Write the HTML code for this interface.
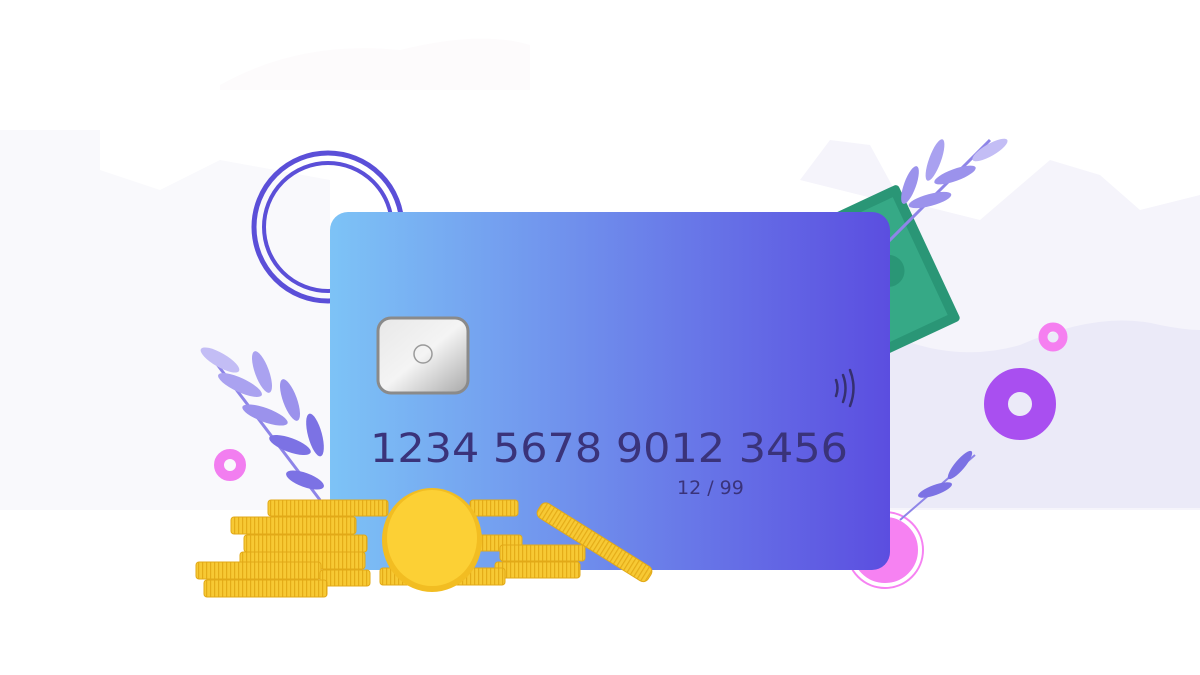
<!DOCTYPE html>
<html><head><meta charset="utf-8"><style>
html,body{margin:0;padding:0;background:#fff;width:1200px;height:675px;overflow:hidden}
svg{display:block}
text{font-family:"DejaVu Sans","Liberation Sans",sans-serif}
</style></head><body>
<svg width="1200" height="675" viewBox="0 0 1200 675" xmlns="http://www.w3.org/2000/svg">
<defs>
<linearGradient id="card" x1="0" y1="0" x2="1" y2="0">
<stop offset="0" stop-color="#7dc3f6"/><stop offset="0.45" stop-color="#6f8eec"/><stop offset="1" stop-color="#5b4ee0"/>
</linearGradient>
<linearGradient id="chip" x1="0" y1="0" x2="1" y2="1">
<stop offset="0" stop-color="#e8e8e8"/><stop offset="0.5" stop-color="#f4f4f4"/><stop offset="1" stop-color="#a9a9a9"/>
</linearGradient>
<pattern id="stripe" width="4" height="10" patternUnits="userSpaceOnUse"><rect width="4" height="10" fill="#f7c934"/><rect x="2" width="1.2" height="10" fill="#e4ac18"/></pattern>
</defs>
<!-- background -->
<path d="M220 85 Q300 40 400 50 Q480 30 530 45 L530 90 L220 90Z" fill="#fdfbfc"/>
<path d="M0 130 L100 130 L100 170 L160 190 L220 160 L330 180 L330 510 L0 510Z" fill="#f9f9fc"/>
<path d="M800 180 L830 140 L870 145 L900 200 L980 220 L1050 160 L1100 175 L1140 210 L1200 195 L1200 510 L880 510 L880 200Z" fill="#f5f4fb"/>
<path d="M880 330 Q950 365 1020 345 Q1100 310 1160 325 Q1185 330 1200 330 L1200 508 L880 508Z" fill="#ebeaf8"/>
<!-- double ring -->
<circle cx="328" cy="227" r="74" fill="none" stroke="#5b4fd8" stroke-width="5"/>
<circle cx="328" cy="227" r="64" fill="none" stroke="#5b4fd8" stroke-width="4"/>
<!-- pink/purple rings -->
<circle cx="1053" cy="337" r="10" fill="none" stroke="#f57ff0" stroke-width="9"/>
<circle cx="1020" cy="404" r="24" fill="none" stroke="#a94ff0" stroke-width="24"/>
<circle cx="230" cy="465" r="11" fill="none" stroke="#f27ef0" stroke-width="10"/>
<circle cx="885" cy="550" r="34" fill="#f682f2" stroke="#fff" stroke-width="2"/>
<circle cx="885" cy="550" r="38" fill="none" stroke="#f682f2" stroke-width="2"/>
<!-- money -->
<g transform="rotate(-25 900 260)">
<rect x="840" y="190" width="90" height="150" rx="4" fill="#2a9676"/>
<rect x="850" y="200" width="70" height="130" fill="#36a986"/>
<circle cx="885" cy="265" r="16" fill="#2a9676"/>
</g>
<!-- leaves -->
<g fill="#9b92ec">
<path d="M880 250 L990 140" stroke="#8e85e8" stroke-width="3"/>
<ellipse cx="990" cy="150" rx="20" ry="6" transform="rotate(-30 990 150)" fill="#c3bdf5"/>
<ellipse cx="955" cy="175" rx="22" ry="6" transform="rotate(-20 955 175)"/>
<ellipse cx="935" cy="160" rx="22" ry="6" transform="rotate(-70 935 160)" fill="#a9a1f0"/>
<ellipse cx="930" cy="200" rx="22" ry="6" transform="rotate(-15 930 200)"/>
<ellipse cx="910" cy="185" rx="20" ry="6" transform="rotate(-70 910 185)"/>
<path d="M320 500 L210 355" stroke="#8e85e8" stroke-width="3"/>
<ellipse cx="220" cy="360" rx="22" ry="7" transform="rotate(30 220 360)" fill="#c3bdf5"/>
<ellipse cx="240" cy="385" rx="24" ry="7" transform="rotate(25 240 385)" fill="#aaa2f0"/>
<ellipse cx="262" cy="372" rx="22" ry="7" transform="rotate(70 262 372)" fill="#aaa2f0"/>
<ellipse cx="265" cy="415" rx="24" ry="7" transform="rotate(20 265 415)"/>
<ellipse cx="290" cy="400" rx="22" ry="7" transform="rotate(70 290 400)"/>
<ellipse cx="290" cy="445" rx="22" ry="7" transform="rotate(20 290 445)" fill="#7c72e4"/>
<ellipse cx="315" cy="435" rx="22" ry="7" transform="rotate(75 315 435)" fill="#7c72e4"/>
<ellipse cx="305" cy="480" rx="20" ry="7" transform="rotate(20 305 480)" fill="#7c72e4"/>
<path d="M900 520 L975 455" stroke="#8e85e8" stroke-width="2"/>
<ellipse cx="960" cy="465" rx="18" ry="5" transform="rotate(-50 960 465)" fill="#7c72e4"/>
<ellipse cx="935" cy="490" rx="18" ry="5" transform="rotate(-20 935 490)" fill="#7c72e4"/>
</g>
<!-- card -->
<rect x="330" y="212" width="560" height="358" rx="18" fill="url(#card)"/>
<rect x="378" y="318" width="90" height="75" rx="13" fill="url(#chip)" stroke="#8a8a8a" stroke-width="3"/>
<circle cx="423" cy="354" r="9" fill="none" stroke="#9a9a9a" stroke-width="1.5"/>
<g fill="none" stroke="#35306f" stroke-width="2.5" stroke-linecap="round">
<path d="M836 380 Q839 388 836 396"/><path d="M843 375 Q848 388 843 402"/><path d="M850 370 Q857 388 850 406"/>
</g>
<text x="370" y="462" font-size="40" fill="#3a337a" textLength="478" lengthAdjust="spacingAndGlyphs">1234 5678 9012 3456</text>
<text x="677" y="494" font-size="19" fill="#3a337a">12 / 99</text>
<!-- coins -->
<g stroke="#e2a917" stroke-width="1">
<rect x="268" y="500" width="120" height="16" rx="3" fill="url(#stripe)"/>
<rect x="231" y="517" width="125" height="17" rx="3" fill="url(#stripe)"/>
<rect x="244" y="535" width="123" height="17" rx="3" fill="url(#stripe)"/>
<rect x="240" y="552" width="125" height="17" rx="3" fill="url(#stripe)"/>
<rect x="196" y="562" width="125" height="17" rx="3" fill="url(#stripe)"/>
<rect x="320" y="570" width="50" height="16" rx="3" fill="url(#stripe)"/>
<rect x="204" y="580" width="123" height="17" rx="3" fill="url(#stripe)"/>
<rect x="470" y="500" width="48" height="16" rx="3" fill="url(#stripe)"/>
<rect x="470" y="535" width="52" height="16" rx="3" fill="url(#stripe)"/>
<rect x="500" y="545" width="85" height="16" rx="3" fill="url(#stripe)"/>
<rect x="495" y="562" width="85" height="16" rx="3" fill="url(#stripe)"/>
<rect x="380" y="568" width="125" height="17" rx="3" fill="url(#stripe)"/>
<rect x="530" y="531" width="130" height="17" rx="6" fill="url(#stripe)" transform="rotate(32 590 540)"/>
</g>
<ellipse cx="432" cy="540" rx="50" ry="52" fill="#f2bd22"/>
<ellipse cx="432" cy="538" rx="45" ry="48" fill="#fcd035"/>
</svg>
</body></html>
